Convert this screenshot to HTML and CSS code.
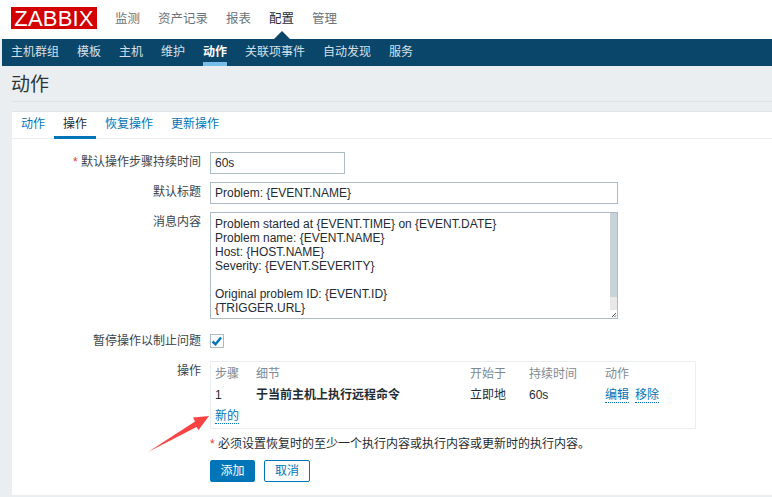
FILE: index.html
```
<!DOCTYPE html>
<html lang="zh">
<head>
<meta charset="utf-8">
<title>动作</title>
<link rel="stylesheet" href="styles.css">
</head>
<body>
<header class="top">
  <div class="logo">ZABBIX</div>
  <nav class="mainnav">
    <a>监测</a><a>资产记录</a><a>报表</a><a class="on">配置</a><a>管理</a>
  </nav>
</header>
<nav class="subnav">
  <a>主机群组</a><a>模板</a><a>主机</a><a>维护</a><a class="on">动作</a><a>关联项事件</a><a>自动发现</a><a>服务</a>
</nav>
<h1 class="title">动作</h1>
<main class="card">
  <div class="tabs">
    <a>动作</a><a class="on">操作</a><a>恢复操作</a><a>更新操作</a>
  </div>
  <form class="form">
    <div class="row r-dur">
      <label class="lbl"><span class="req">*</span> 默认操作步骤持续时间</label>
      <div class="inp w-short">60s</div>
    </div>
    <div class="row r-subj">
      <label class="lbl">默认标题</label>
      <div class="inp w-long">Problem: {EVENT.NAME}</div>
    </div>
    <div class="row r-msg">
      <label class="lbl">消息内容</label>
      <div class="area">
        <div class="area-text">Problem started at {EVENT.TIME} on {EVENT.DATE}
Problem name: {EVENT.NAME}
Host: {HOST.NAME}
Severity: {EVENT.SEVERITY}

Original problem ID: {EVENT.ID}
{TRIGGER.URL}</div>
        <div class="sb"><div class="sb-thumb"></div><div class="sb-corner"><svg width="8" height="8" viewBox="0 0 8 8"><path d="M7 3 3 7M7 5.5 5.500 7" stroke="#555" stroke-width="1" fill="none"/></svg></div></div>
      </div>
    </div>
    <div class="row r-chk">
      <label class="lbl lbl-chk">暂停操作以制止问题</label>
      <div class="chk"><svg width="14" height="14" viewBox="0 0 14 14"><path d="M2.500 7.500 5.500 10.200 11 3.500" stroke="#0275b8" stroke-width="2.400" fill="none"/></svg></div>
    </div>
    <div class="row r-ops">
      <label class="lbl">操作</label>
      <div class="ops">
        <div class="ops-grid head"><span>步骤</span><span>细节</span><span>开始于</span><span>持续时间</span><span>动作</span></div>
        <div class="ops-grid body"><span>1</span><b>于当前主机上执行远程命令</b><span>立即地</span><span>60s</span><span class="acts"><a class="lnk">编辑</a><a class="lnk">移除</a></span></div>
        <div class="new"><a class="lnk">新的</a></div>
      </div>
    </div>
    <p class="note"><span class="req">*</span> 必须设置恢复时的至少一个执行内容或执行内容或更新时的执行内容。</p>
    <div class="btns"><button type="button" class="btn pri">添加</button><button type="button" class="btn sec">取消</button></div>
  </form>
</main>
<svg class="arrow" width="100" height="60" viewBox="130 400 100 60"><path d="M148 452 195 421.500 193 417.500 209 416 198.500 430 196.500 427Z" fill="#fb4343"/></svg>
</body>
</html>
```
FILE: styles.css
```
* { box-sizing: border-box; }
html, body { margin: 0; padding: 0; }
body {
  width: 772px; height: 497px; overflow: hidden; position: relative;
  background: #ebeef0; color: #1f2c33;
  font: 12px/14px "Liberation Sans", "Noto Sans CJK SC", sans-serif;
  padding-left: 2px;
}
a { color: inherit; text-decoration: none; }
.top { height: 39px; background: #fff; margin-left: -2px; padding-left: 11px; display: flex; }
.logo {
  width: 86px; height: 22px; margin-top: 7px; background: #d40000; color: #fff;
  font-size: 22px; line-height: 23px; text-align: center; letter-spacing: 0.2px;
}
.mainnav { display: flex; gap: 18px; margin-left: 18px; padding-top: 12px; font-size: 12.5px; color: #6b7479; position: relative; }
.mainnav .on { color: #1f2c33; position: relative; }
.mainnav .on::after {
  content: ""; position: absolute; left: 5px; top: 19px; width: 0; height: 0;
  border: 8px solid transparent; border-top: 0; border-bottom: 8px solid #0a466a;
}
.subnav {
  height: 27px; background: #0a466a; color: #d5e0e6; display: flex; gap: 18px;
  padding-left: 9px; font-size: 12px; line-height: 26px;
}
.subnav .on { color: #fff; font-weight: 700; border-bottom: 4px solid #76bdea; height: 27px; }
.title {
  margin: 0 0 9px 9px; height: 36px; border-bottom: 1px solid #dfe3e6;
  font-weight: 400; font-size: 19px; line-height: 38px; color: #2c3439;
}
.card { margin-left: 10px; background: #fff; height: 384px; border-top: 1px solid #dfe4e7; }
.tabs { height: 27px; display: flex; border-bottom: 1px solid #ebeef0; color: #0275b8; line-height: 25px; }
.tabs a { padding: 0 9px; height: 27px; }
.tabs .on { color: #1f2c33; border-bottom: 3px solid #0275b8; }
.row { display: flex; align-items: flex-start; }
.lbl { width: 198px; text-align: right; padding: 3px 9px 0 0; color: #3a4449; flex: none; }
.lbl-chk { padding-top: 0; }
.req { color: #e33734; }
.inp { height: 22px; border: 1px solid #acbbc4; padding: 0 4px; line-height: 20px; }
.w-short { width: 135px; }
.w-long { width: 408px; }
.r-dur { margin-top: 13px; }
.r-subj { margin-top: 8px; }
.r-msg { margin-top: 8px; }
.area { width: 408px; height: 107px; border: 1px solid #acbbc4; display: flex; justify-content: space-between; }
.area-text { padding: 4px 4px; white-space: pre; line-height: 14px; }
.sb { width: 7px; background: #e8e8e8; position: relative; }
.sb-thumb { height: 84px; background: #c8d2d9; }
.sb-corner { position: absolute; right: 0; bottom: 0; width: 8px; height: 8px; background: #fff; line-height: 0; }
.r-chk { margin-top: 15px; }
.chk { width: 14px; height: 14px; border: 1px solid #acbbc4; line-height: 0; }
.chk svg { margin: -1px; }
.r-ops { margin-top: 13px; }
.ops { width: 486px; height: 68px; border: 1px solid #ebeef0; padding: 5px 4px; }
.ops-grid { display: grid; grid-template-columns: 41px 214px 59px 76px 1fr; }
.head { color: #7d8a93; height: 14px; }
.body { margin-top: 7px; height: 14px; }
.body b { font-weight: 700; }
.acts { display: flex; gap: 6px; }
.lnk { color: #0275b8; border-bottom: 1px dotted #0275b8; height: 15px; display: inline-block; }
.new { margin-top: 7px; }
.note { margin: 8px 0 0 198px; line-height: 14px; }
.btns { display: flex; gap: 9px; margin: 9px 0 0 198px; }
.btn { height: 22px; width: 45px; font: inherit; padding: 0; border-radius: 2px; }
.pri { background: #0275b8; border: 1px solid #0275b8; color: #fff; }
.sec { width: 46px; background: #fff; border: 1px solid #0275b8; color: #0275b8; }
.arrow { position: absolute; left: 130px; top: 400px; }
```
